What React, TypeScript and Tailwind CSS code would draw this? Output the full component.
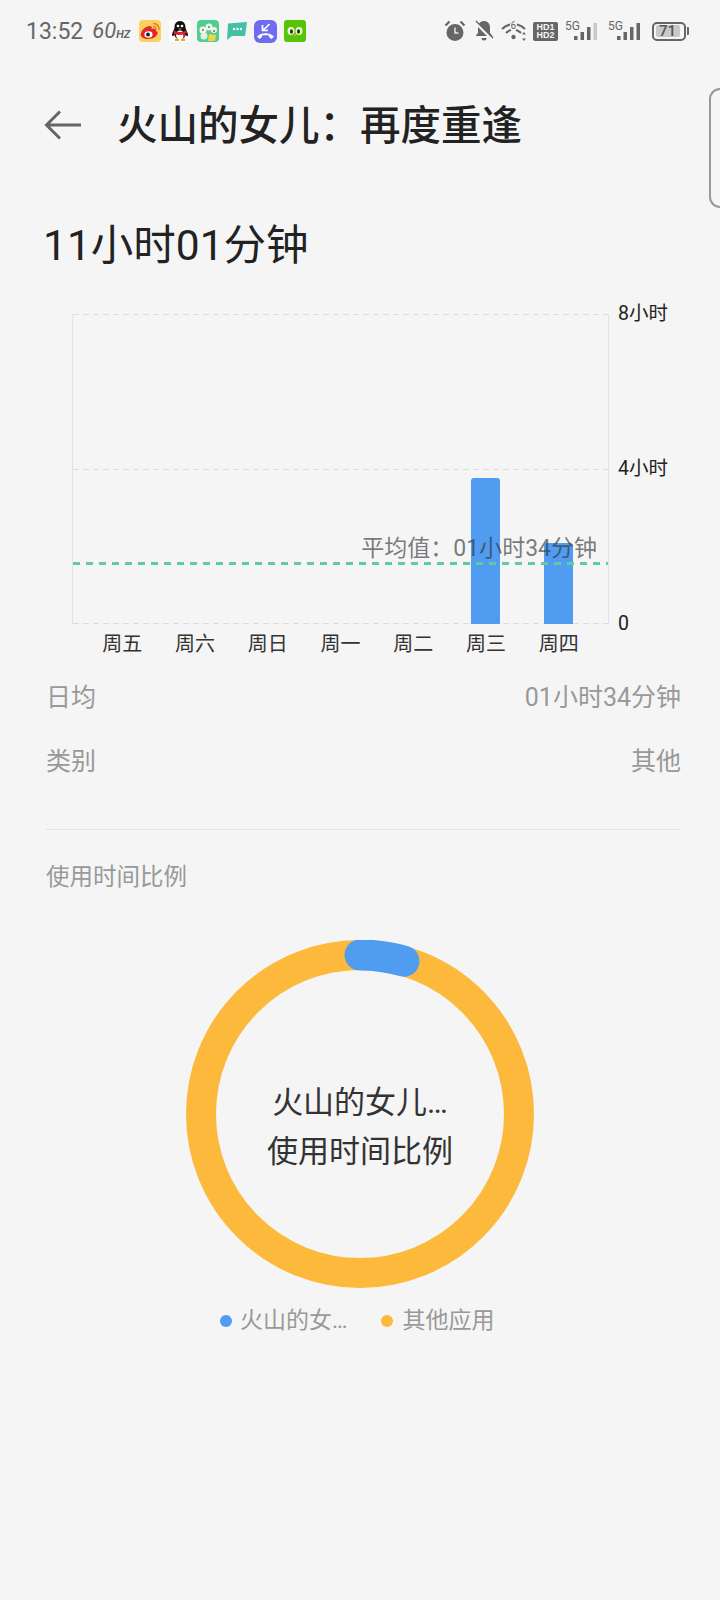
const days = [
  { label: "周五", h: 0 },
  { label: "周六", h: 0 },
  { label: "周日", h: 0 },
  { label: "周一", h: 0 },
  { label: "周二", h: 0 },
  { label: "周三", h: 146 },
  { label: "周四", h: 81 },
]

function Signal({ last }: { last: string }) {
  return (
    <svg width="36" height="22" viewBox="0 0 36 22" className="block">
      <text x="0" y="10" fontSize="12" fill="#666" fontFamily="Roboto">5G</text>
      <rect x="9" y="16" width="3.500" height="4" fill="#666" />
      <rect x="15.500" y="12" width="3.500" height="8" fill="#666" />
      <rect x="22" y="7" width="3.500" height="13" fill="#666" />
      <rect x="28.500" y="3" width="3.500" height="17" fill={last} />
    </svg>
  )
}

function AppIcons() {
  return (
    <div className="flex items-center ml-[9px]">
      {/* weibo */}
      <svg width="22" height="22" viewBox="0 0 22 22">
        <rect width="22" height="22" rx="4" fill="#fbd25f" />
        <path d="M2 14c0-4 5-8 9-8 2 0 2 2 1.500 3 3-1 5 0 4.500 2 2 .5 2 2.500 1 4-2 3-6 4-9 4-4 0-7.500-2-7.500-5z" fill="#e6262d" />
        <ellipse cx="9.500" cy="14.500" rx="4" ry="3.300" fill="#fff" />
        <circle cx="9" cy="14.500" r="2" fill="#222" />
        <path d="M14 3.500a5.500 5.500 0 0 1 6 6.500M14 6.500a2.500 2.500 0 0 1 3 3" stroke="#ee7a22" strokeWidth="1.500" fill="none" />
      </svg>
      {/* qq */}
      <svg width="22" height="22" viewBox="0 0 22 22" className="ml-[8px]">
        <rect width="22" height="22" rx="4" fill="#fff" />
        <path d="M11 1c-4 0-5.500 3-5.500 6.500 0 2-2.500 5-2.500 7.500 0 1.500 1 1.500 2.500 0 .5 2 1.500 3 3 4h5c1.500-1 2.500-2 3-4 1.500 1.500 2.500 1.500 2.500 0 0-2.500-2.500-5.500-2.500-7.500C16.500 4 15 1 11 1z" fill="#111" />
        <ellipse cx="11" cy="15" rx="4" ry="4.500" fill="#fff" />
        <path d="M4.500 10.500 q6.500 3 13 0 l.5 2.500 -2 .5v3h-2v-2q-4 1 -9-.5z" fill="#d8232a" />
        <path d="M6 20h4M12 20h4" stroke="#f2a51f" strokeWidth="2" />
        <circle cx="9" cy="6" r="1.300" fill="#fff" />
        <circle cx="13" cy="6" r="1.300" fill="#fff" />
        <path d="M9.500 8.500h3L11 10z" fill="#f2a51f" />
      </svg>
      {/* flowers */}
      <svg width="22" height="22" viewBox="0 0 22 22" className="ml-[6px]">
        <rect width="22" height="22" rx="4" fill="#4fcf8f" />
        <circle cx="6" cy="10" r="3.500" fill="#f4f4ee" />
        <circle cx="12" cy="7" r="3.500" fill="#f4f4ee" />
        <circle cx="17" cy="10" r="3" fill="#f4f4ee" />
        <circle cx="7" cy="16" r="3.500" fill="#e9ece0" />
        <path d="M12 14l7 1-1 6h-7z" fill="#f5d24a" />
        <circle cx="6" cy="10" r="1" fill="#5c7a62" />
        <circle cx="12" cy="7" r="1" fill="#5c7a62" />
        <circle cx="17" cy="11" r="1" fill="#5c7a62" />
      </svg>
      {/* message */}
      <svg width="22" height="22" viewBox="0 0 22 22" className="ml-[7px]">
        <path d="M2 3.500 21 2l-2 14H6l-5 4z" fill="#45bfa6" />
        <circle cx="8" cy="9" r="1.200" fill="#fff" />
        <circle cx="11.500" cy="9" r="1.200" fill="#fff" />
        <circle cx="15" cy="9" r="1.200" fill="#fff" />
      </svg>
      {/* missed call */}
      <svg width="23" height="23" viewBox="0 0 23 23" className="ml-[6px]">
        <rect width="23" height="23" rx="6" fill="#6f6cf0" />
        <path d="M15.500 4l-6 6M8.500 5v5.500H14" stroke="#fff" strokeWidth="1.700" fill="none" />
        <path d="M3 16.500c4-4.500 13-4.500 17 0l-2.500 2.500-2.500-2v-1.500c-2-.5-5-.5-7 0V17l-2.500 2z" fill="#fff" />
      </svg>
      {/* duolingo */}
      <svg width="22" height="22" viewBox="0 0 22 22" className="ml-[7px]">
        <rect width="22" height="22" rx="3" fill="#58c406" />
        <ellipse cx="7" cy="11" rx="3.500" ry="4" fill="#e8f5d0" />
        <ellipse cx="15" cy="11" rx="3.500" ry="4" fill="#e8f5d0" />
        <ellipse cx="7.500" cy="11.500" rx="1.500" ry="2.200" fill="#1f3b0a" />
        <ellipse cx="14.500" cy="11.500" rx="1.500" ry="2.200" fill="#1f3b0a" />
        <path d="M9.500 14h3L11 17z" fill="#f2a51f" />
      </svg>
    </div>
  )
}

function StatusRight() {
  return (
    <div className="flex items-center ml-auto mr-[31px]">
      {/* alarm */}
      <svg width="22" height="22" viewBox="0 0 22 22">
        <circle cx="11" cy="12.500" r="8.500" fill="#666" />
        <path d="M1.500 5.500 5.500 1.500M20.500 5.500 16.500 1.500" stroke="#666" strokeWidth="2.200" />
        <path d="M11 7.500v5.500h3.500" stroke="#e4e4e4" strokeWidth="1.500" fill="none" />
      </svg>
      {/* bell off */}
      <svg width="20" height="22" viewBox="0 0 20 22" className="ml-[8px]">
        <path d="M10 1c-4 0-6 3-6 7v5l-2.500 3h17L16 13V8c0-4-2-7-6-7z" fill="#666" />
        <path d="M7.500 18h5a2.500 2.500 0 0 1-5 0z" fill="#666" />
        <path d="M0 1l19 19" stroke="#f5f5f5" strokeWidth="3" />
        <path d="M2 1l17 17" stroke="#666" strokeWidth="1.500" />
      </svg>
      {/* wifi 6 */}
      <svg width="26" height="22" viewBox="0 0 26 22" className="ml-[7px]">
        <path d="M1 9c3-3 6-4 8-4.500M24 9c-3-3-6-4-8-4.500M5 13c2-2 3-2.500 5-3M20 13c-2-2-3-2.500-5-3" stroke="#666" strokeWidth="2.200" fill="none" />
        <text x="9.500" y="9" fontSize="10" fill="#666" fontFamily="Roboto">6</text>
        <circle cx="12.500" cy="17" r="2.200" fill="#666" />
        <path d="M23 12l2 2.500h-4zM23 21l2-2.500h-4z" fill="#666" />
      </svg>
      {/* HD badge */}
      <div className="ml-[6px] w-[25px] h-[19px] rounded-[2px] bg-[#666] flex flex-col items-center justify-center text-[#f5f5f5] text-[9px] leading-[8.500px] font-bold font-['Liberation_Sans',sans-serif]">
        <span>HD1</span>
        <span>HD2</span>
      </div>
      <div className="ml-[7px]">
        <Signal last="#c8c8c8" />
      </div>
      <div className="ml-[7px]">
        <Signal last="#666" />
      </div>
      {/* battery */}
      <div className="ml-[8px] flex items-center">
        <div className="w-[34px] h-[19px] rounded-[5px] border-2 border-[#666] p-[1.500px] flex">
          <div className="w-[24px] bg-[#c9c9c9] rounded-[2px] flex items-center justify-center text-[#555] text-[15px] leading-none font-medium">
            71
          </div>
        </div>
        <div className="ml-[1px] w-[2px] h-[8px] bg-[#666] rounded-r-[1px]" />
      </div>
    </div>
  )
}

function Chart() {
  return (
    <div className="mt-[38px] ml-[72px] flex">
      <div className="relative w-[537px] h-[310px] border-x border-[#e3e3e3]">
        <div className="flex flex-col h-full">
          <div className="flex-1">
            <div className="h-px bg-[repeating-linear-gradient(90deg,#dcdcdc_0_6px,transparent_6px_10px)]" />
          </div>
          <div className="flex-1">
            <div className="h-px bg-[repeating-linear-gradient(90deg,#dcdcdc_0_6px,transparent_6px_10px)]" />
          </div>
          <div className="h-px bg-[repeating-linear-gradient(90deg,#dcdcdc_0_6px,transparent_6px_10px)]" />
        </div>
        <div className="absolute inset-0 px-[13px] flex">
          {days.map((d) => (
            <div key={d.label} className="relative flex-1 flex items-end justify-center">
              {d.h > 0 && (
                <div className="w-[29px] bg-[#4f9cf0] rounded-t-[3px]" style={{ height: d.h }} />
              )}
              <span className="absolute top-[318px] text-[20px] leading-[24px] text-[#333] whitespace-nowrap">
                {d.label}
              </span>
            </div>
          ))}
        </div>
        <svg className="absolute left-0 top-[248px]" width="535" height="3">
          <line x1="0" y1="1.500" x2="535" y2="1.500" stroke="#5dcba3" strokeWidth="3" strokeDasharray="7 6" />
        </svg>
        <span className="absolute right-[11px] top-[220px] text-[23px] leading-[30px] text-[#333333]/65 whitespace-nowrap">
          {"平均值\uFF1A01小时34分钟"}
        </span>
      </div>
      <div className="ml-[9px] h-[334px] -mt-[12px] flex flex-col justify-between text-[19.500px] leading-[24px] text-[#222]">
        <span>8小时</span>
        <span>4小时</span>
        <span>0</span>
      </div>
    </div>
  )
}

function Donut() {
  return (
    <div className="relative mt-[47px] mx-auto w-[348px] h-[348px]">
      <svg width="348" height="348" viewBox="0 0 348 348">
        <circle cx="174" cy="174" r="159" fill="none" stroke="#fcb93c" strokeWidth="30" />
        <path d="M174 15A159 159 0 0 1 218 21.200" fill="none" stroke="#4f9cf0" strokeWidth="31" strokeLinecap="round" />
      </svg>
      <div className="absolute inset-0 pt-[25px] flex flex-col items-center justify-center text-[#333] text-[31px] leading-[49px]">
        <span>火山的女儿…</span>
        <span>使用时间比例</span>
      </div>
    </div>
  )
}

export default function App() {
  return (
    <div className="relative w-[720px] h-[1600px] overflow-hidden bg-[#f5f5f5] font-['Roboto','Noto_Sans_CJK_SC',sans-serif]">
      {/* status bar */}
      <div className="h-[62px] pl-[26px] flex items-center text-[#666]">
        <span className="text-[23px] leading-none">13:52</span>
        <span className="ml-[9px] italic text-[22px] leading-none">
          60<span className="text-[11px] font-bold">HZ</span>
        </span>
        <AppIcons />
        <StatusRight />
      </div>

      {/* header */}
      <div className="h-[128px] flex items-center pl-[44px]">
        <svg width="38" height="30" viewBox="0 0 38 30" className="-mt-[3px]">
          <path d="M37 15H3M16 1.500 2.500 15 16 28.500" stroke="#666" strokeWidth="3" fill="none" />
        </svg>
        <h1 className="ml-[35px] text-[40.500px] leading-none font-medium text-[#222]">
          {"火山的女儿\uFF1A再度重逢"}
        </h1>
      </div>

      {/* side handle */}
      <div className="absolute right-0 top-[88px] w-[11px] h-[120px] rounded-l-[12px] border-2 border-r-0 border-[#999]" />

      <h2 className="pl-[43px] mt-[26px] text-[42.500px] leading-[60px] text-[#222]">11小时01分钟</h2>

      <Chart />

      {/* info rows */}
      <div className="mt-[45px] pl-[46px] pr-[39px] text-[#999] text-[25px] leading-[34px]">
        <div className="flex justify-between">
          <span>日均</span>
          <span>01小时34分钟</span>
        </div>
        <div className="mt-[30px] flex justify-between">
          <span>类别</span>
          <span>其他</span>
        </div>
      </div>

      <div className="mt-[50px] ml-[46px] mr-[39px] h-px bg-[#e2e2e2]" />

      <p className="mt-[31px] pl-[46px] text-[23.500px] leading-[32px] text-[#999]">使用时间比例</p>

      <Donut />

      {/* legend */}
      <div className="mt-[17px] flex items-center text-[#999] text-[23px] leading-[32px] pl-[220px]">
        <span className="w-[12px] h-[12px] rounded-full bg-[#4f9cf0]" />
        <span className="ml-[8px]">火山的女…</span>
        <span className="ml-[34px] w-[12px] h-[12px] rounded-full bg-[#fcb93c]" />
        <span className="ml-[9px]">其他应用</span>
      </div>
    </div>
  )
}
